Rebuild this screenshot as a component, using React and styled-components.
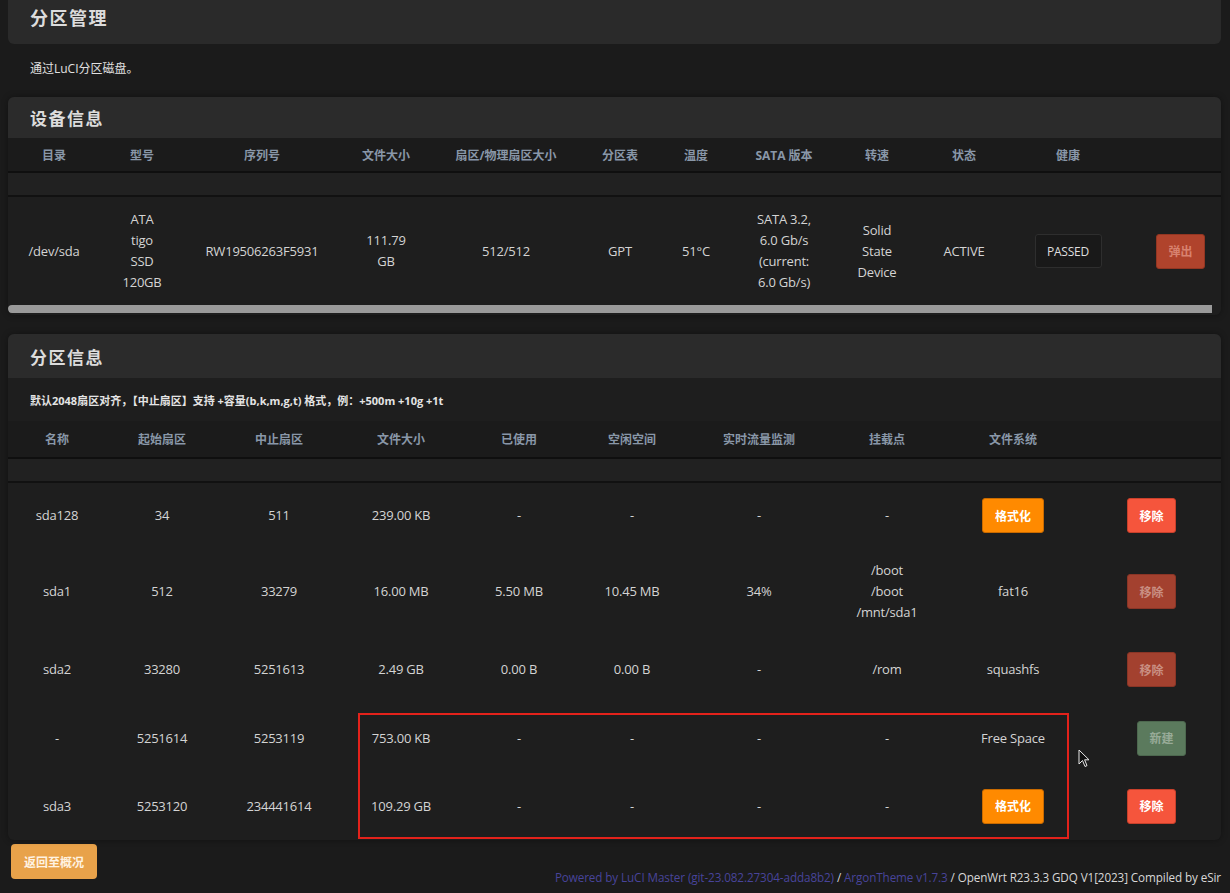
import React from 'react';
import styled, { createGlobalStyle } from 'styled-components';

const GlobalStyle = createGlobalStyle`
  html, body {
    margin: 0;
    padding: 0;
    background: #1b1b1b;
    font-family: "Open Sans", "Noto Sans CJK SC", sans-serif;
    color: #d2d2d2;
  }
  * { box-sizing: border-box; }
`;

const Page = styled.div`
  padding: 0 9px 0 8px;
  min-height: 893px;
  display: flex;
  flex-direction: column;
`;

const TitleBar = styled.div`
  height: 44px;
  padding: 0 22px 10px;
  display: flex;
  align-items: center;
  background: #2a2a2a;
  border-radius: 0 0 6px 6px;
`;

const PageTitle = styled.h2`
  margin: 0;
  font-size: 18px;
  font-weight: 700;
  letter-spacing: 1.5px;
  color: #dcdcdc;
`;

const PageDesc = styled.div`
  padding: 16px 22px 0;
  margin-bottom: 19px;
  font-size: 12px;
  line-height: 18px;
  color: #e0e0e0;
`;

const Card = styled.section`
  position: relative;
  background: #1e1e1e;
  border-radius: 6px;
  overflow: hidden;
  margin-bottom: ${p => p.$gap || 0}px;
  box-shadow: 0 0 6px rgba(0, 0, 0, 0.35);
`;

const CardHeader = styled.div`
  height: ${p => p.$h || 42}px;
  padding: 0 22px;
  display: flex;
  align-items: center;
  background: #2b2b2b;
`;

const CardTitle = styled.h3`
  margin: 0;
  font-size: 17px;
  font-weight: 700;
  letter-spacing: 1.5px;
  color: #dcdcdc;
`;

const CardDesc = styled.div`
  height: 43px;
  padding: 0 22px;
  display: flex;
  align-items: center;
  font-size: 11px;
  font-weight: 700;
  color: #e4e4e4;
`;

const Table = styled.table`
  width: 100%;
  border-collapse: collapse;
  table-layout: fixed;
`;

const Col = styled.col`
  width: ${p => p.$w}px;
`;

const HeadRow = styled.tr`
  height: ${p => p.$h || 35}px;
  background: #1b1b1b;
  border-bottom: 2px solid #0f0f0f;
`;

const Th = styled.th`
  font-size: 12px;
  font-weight: 700;
  color: #8997a8;
  text-align: center;
  padding: 0 4px;
  white-space: nowrap;
`;

const SpacerRow = styled.tr`
  height: 24px;
  background: #212121;
  border-bottom: 2px solid #111;
`;

const Row = styled.tr`
  height: ${p => p.$h || 68}px;
`;

const Td = styled.td`
  text-align: center;
  vertical-align: middle;
  padding: 12px 4px;
  font-size: 13px;
  line-height: 21px;
  color: #d4d4d4;
  white-space: nowrap;
  letter-spacing: -0.2px;
`;

const Button = styled.button`
  height: 35px;
  padding: 0 ${p => p.$px || 11}px;
  margin-left: ${p => p.$shift || 0}px;
  border: 1px solid ${p => p.$border};
  border-radius: 3px;
  background: ${p => p.$bg};
  color: ${p => p.$fg || '#fff'};
  font-family: inherit;
  font-size: 12px;
  font-weight: 700;
  cursor: pointer;
`;

const HealthBox = styled.div`
  display: inline-flex;
  align-items: center;
  justify-content: center;
  width: 67px;
  height: 34px;
  border: 1px solid #2e2e2e;
  border-radius: 3px;
  background: #191919;
  font-size: 12px;
  color: #dedede;
`;

const ScrollTrack = styled.div`
  height: 10px;
  padding: 0 9px 2px 0;
  background: #1e1e1e;
`;

const ScrollThumb = styled.div`
  height: 8px;
  background: #9a9a9a;
  border-radius: 4px 0 0 4px;
`;

const Highlight = styled.div`
  position: absolute;
  left: 350px;
  top: 379px;
  width: 711px;
  height: 126px;
  border: 2px solid #e3221b;
  pointer-events: none;
`;

const Pointer = styled.svg`
  position: absolute;
  left: 1070px;
  top: 415px;
`;

const Footer = styled.div`
  display: flex;
  justify-content: space-between;
  align-items: flex-end;
  padding: 4px 0 10px 3px;
`;

const BackButton = styled.button`
  height: 35px;
  padding: 0 13px;
  border: none;
  border-radius: 4px;
  background: #e8a24a;
  color: #fff3e2;
  font-family: inherit;
  font-size: 12px;
  font-weight: 600;
`;

const Credits = styled.div`
  font-size: 11.7px;
  letter-spacing: -0.1px;
  color: #d8d8d8;
  margin-bottom: -6px;
  white-space: nowrap;
`;

const CreditLink = styled.a`
  color: #48449a;
  text-decoration: none;
`;

const Lines = ({ items }) =>
  items.map((l, i) => (
    <React.Fragment key={i}>
      {i > 0 && <br />}
      {l}
    </React.Fragment>
  ));

const deviceCols = [92, 84, 156, 92, 148, 80, 72, 104, 82, 92, 116, 95];
const deviceHeads = ['目录', '型号', '序列号', '文件大小', '扇区/物理扇区大小', '分区表', '温度', 'SATA 版本', '转速', '状态', '健康', ''];

const partCols = [98, 112, 122, 122, 114, 112, 142, 114, 138, 139];
const partHeads = ['名称', '起始扇区', '中止扇区', '文件大小', '已使用', '空闲空间', '实时流量监测', '挂载点', '文件系统', ''];

const FormatBtn = () => (
  <Button $bg="#ff8a00" $border="#c86a00" $px={12}>格式化</Button>
);
const RemoveBtn = ({ disabled }) =>
  disabled
    ? <Button $bg="#a3412f" $border="#8a3526" $fg="#c98f83">移除</Button>
    : <Button $bg="#f5553c" $border="#c8402b">移除</Button>;

const partitions = [
  { h: 66, name: 'sda128', start: '34', end: '511', size: '239.00 KB', used: '-', free: '-', usage: '-', mount: ['-'], fs: <FormatBtn />, action: <RemoveBtn /> },
  { h: 87, name: 'sda1', start: '512', end: '33279', size: '16.00 MB', used: '5.50 MB', free: '10.45 MB', usage: '34%', mount: ['/boot', '/boot', '/mnt/sda1'], fs: 'fat16', action: <RemoveBtn disabled /> },
  { h: 69, name: 'sda2', start: '33280', end: '5251613', size: '2.49 GB', used: '0.00 B', free: '0.00 B', usage: '-', mount: ['/rom'], fs: 'squashfs', action: <RemoveBtn disabled /> },
  { h: 68, name: '-', start: '5251614', end: '5253119', size: '753.00 KB', used: '-', free: '-', usage: '-', mount: ['-'], fs: 'Free Space', action: <Button $bg="#5b7a5d" $border="#4d684f" $fg="#98ab98" $shift={20}>新建</Button> },
  { h: 68, name: 'sda3', start: '5253120', end: '234441614', size: '109.29 GB', used: '-', free: '-', usage: '-', mount: ['-'], fs: <FormatBtn />, action: <RemoveBtn /> },
];

export default function App() {
  return (
    <>
      <GlobalStyle />
      <Page>
        <TitleBar>
          <PageTitle>分区管理</PageTitle>
        </TitleBar>
        <PageDesc>通过LuCI分区磁盘。</PageDesc>

        <Card $gap={19}>
          <CardHeader $h={41}>
            <CardTitle>设备信息</CardTitle>
          </CardHeader>
          <Table>
            <colgroup>
              {deviceCols.map((w, i) => <Col key={i} $w={w} />)}
            </colgroup>
            <thead>
              <HeadRow $h={34}>
                {deviceHeads.map((h, i) => <Th key={i}>{h}</Th>)}
              </HeadRow>
            </thead>
            <tbody>
              <SpacerRow><td colSpan={12} /></SpacerRow>
              <Row $h={108}>
                <Td>/dev/sda</Td>
                <Td><Lines items={['ATA', 'tigo', 'SSD', '120GB']} /></Td>
                <Td>RW19506263F5931</Td>
                <Td><Lines items={['111.79', 'GB']} /></Td>
                <Td>512/512</Td>
                <Td>GPT</Td>
                <Td>51°C</Td>
                <Td><Lines items={['SATA 3.2,', '6.0 Gb/s', '(current:', '6.0 Gb/s)']} /></Td>
                <Td><Lines items={['Solid', 'State', 'Device']} /></Td>
                <Td>ACTIVE</Td>
                <Td><HealthBox>PASSED</HealthBox></Td>
                <Td><Button $bg="#b0432c" $border="#933622" $fg="#d8826f" $shift={14}>弹出</Button></Td>
              </Row>
            </tbody>
          </Table>
          <ScrollTrack>
            <ScrollThumb />
          </ScrollTrack>
        </Card>

        <Card>
          <CardHeader $h={44}>
            <CardTitle>分区信息</CardTitle>
          </CardHeader>
          <CardDesc>默认2048扇区对齐，【中止扇区】支持 +容量(b,k,m,g,t) 格式，例：+500m +10g +1t</CardDesc>
          <Table>
            <colgroup>
              {partCols.map((w, i) => <Col key={i} $w={w} />)}
            </colgroup>
            <thead>
              <HeadRow $h={37}>
                {partHeads.map((h, i) => <Th key={i}>{h}</Th>)}
              </HeadRow>
            </thead>
            <tbody>
              <SpacerRow><td colSpan={10} /></SpacerRow>
              {partitions.map(p => (
                <Row key={p.name + p.start} $h={p.h}>
                  <Td>{p.name}</Td>
                  <Td>{p.start}</Td>
                  <Td>{p.end}</Td>
                  <Td>{p.size}</Td>
                  <Td>{p.used}</Td>
                  <Td>{p.free}</Td>
                  <Td>{p.usage}</Td>
                  <Td><Lines items={p.mount} /></Td>
                  <Td>{p.fs}</Td>
                  <Td>{p.action}</Td>
                </Row>
              ))}
            </tbody>
          </Table>
          <Highlight />
          <Pointer width="12" height="19" viewBox="0 0 12 19">
            <path d="M1 1 L1 15 L4.5 11.5 L7 17.5 L9 16.6 L6.6 10.8 L11 10.8 Z" fill="#111" stroke="#e8e8e8" strokeWidth="1" strokeLinejoin="round" />
          </Pointer>
        </Card>

        <Footer>
          <BackButton>返回至概况</BackButton>
          <Credits>
            <CreditLink href="#">Powered by LuCI Master (git-23.082.27304-adda8b2)</CreditLink>
            {' / '}
            <CreditLink href="#">ArgonTheme v1.7.3</CreditLink>
            {' / OpenWrt R23.3.3 GDQ V1[2023] Compiled by eSir'}
          </Credits>
        </Footer>
      </Page>
    </>
  );
}
